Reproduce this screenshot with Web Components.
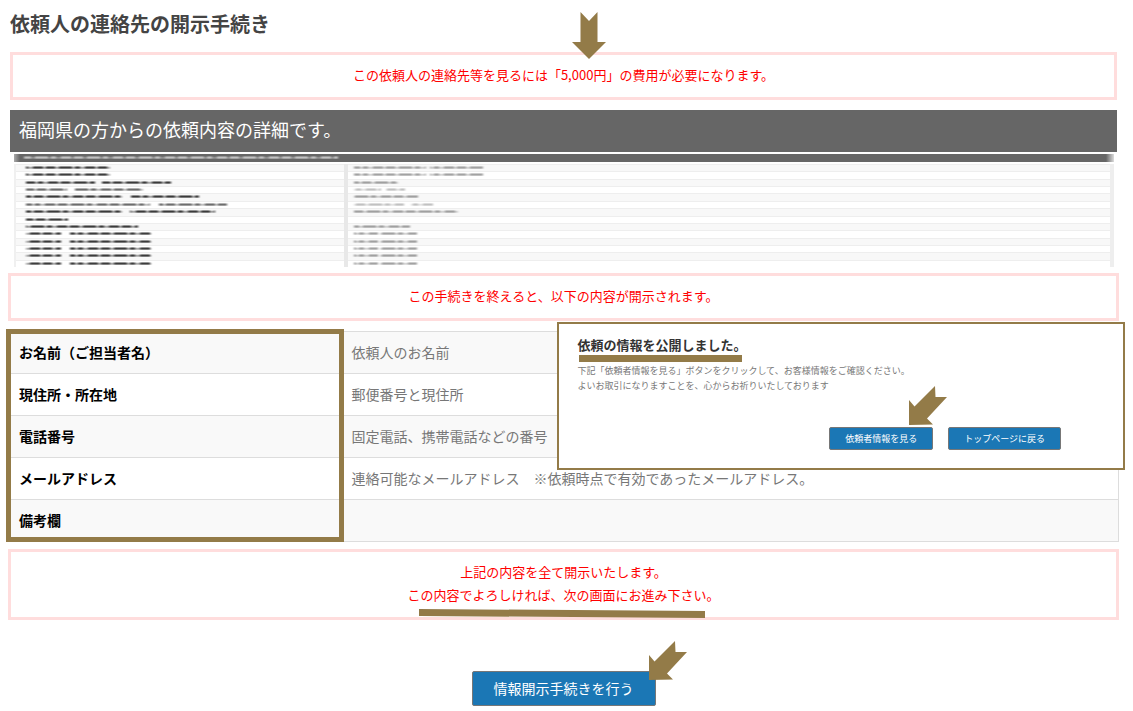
<!DOCTYPE html>
<html lang="ja">
<head>
<meta charset="UTF-8">
<meta name="viewport" content="width=device-width, initial-scale=1.0">
<title>依頼人の連絡先の開示手続き</title>
<style>
    body {
        margin: 0;
        background: #fff;
        font-family: "Noto Sans CJK JP", sans-serif;
        --mark: #937b48;
        --blue: #1b77b5;
        --dark: #666;
        --pink: #fdd;
    }
</style>
</head>
<body>
<disclosure-page></disclosure-page>

<script>
class MarkArrow extends HTMLElement {
    constructor() {
        super();
        this.attachShadow({ mode: 'open' });
        const down = this.getAttribute('direction') === 'down';
        const box = down ? [34, 47] : [38, 39];
        const points = down
            ? '8.5,0 17,9 25.5,0 25.5,30 34,30 17,47 0,30 8.5,30'
            : '26,0 26.5,11 38,11 18,32.5 24,38.5 0,39 0,14 5.5,20.5';
        this.shadowRoot.innerHTML = `
            <style>
                :host { display: block; pointer-events: none; }
                svg { display: block; fill: var(--mark); }
            </style>
            <svg width="${box[0]}" height="${box[1]}" viewBox="0 0 ${box[0]} ${box[1]}" aria-hidden="true">
                <polygon points="${points}"/>
            </svg>
        `;
    }
}

class NoticeBox extends HTMLElement {
    constructor() {
        super();
        this.attachShadow({ mode: 'open' });
        this.shadowRoot.innerHTML = `
            <style>
                :host {
                    display: block;
                    position: relative;
                    padding: 8px 10px 11px;
                    border: 3px solid var(--pink);
                    color: #f00;
                    font-size: 13px;
                    line-height: 23px;
                    text-align: center;
                }
            </style>
            <slot></slot>
        `;
    }
}

class ActionButton extends HTMLElement {
    constructor() {
        super();
        this.attachShadow({ mode: 'open' });
        this.shadowRoot.innerHTML = `
            <style>
                :host { display: inline-block; position: relative; }
                button {
                    display: block;
                    padding: 5px 21px;
                    border: 1px solid #777;
                    border-radius: 2px;
                    background: var(--blue);
                    color: #fff;
                    font-family: inherit;
                    font-size: 14px;
                    line-height: 23px;
                    cursor: pointer;
                }
                :host([size="small"]) button {
                    padding: 3px 15px;
                    font-size: 9px;
                    line-height: 15px;
                }
            </style>
            <button type="button"><slot></slot></button>
            <slot name="mark"></slot>
        `;
    }
}

// Flattened list of the request; every entry is [start, length] of a smudge
class RequestPreview extends HTMLElement {
    constructor() {
        super();
        this.attachShadow({ mode: 'open' });
        const image = { label: [[0, 35], [44, 81]], value: [[0, 24], [26, 37]] };
        const rows = [
            { label: [[0, 84]], value: [[0, 72], [76, 53]] },
            { label: [[0, 84]], value: [[0, 72], [76, 53]] },
            { label: [[0, 69], [76, 69]], value: [[0, 44]] },
            { label: [[0, 41], [49, 68]], value: [[0, 27], [32, 19]], faint: true },
            { label: [[0, 96], [105, 68]], value: [[0, 64]] },
            { label: [[0, 124], [133, 68]], value: [[0, 50], [57, 22]], faint: true },
            { label: [[0, 96], [104, 85]], value: [[0, 104]] },
            { label: [[0, 42]], value: [] },
            { label: [[0, 112]], value: [[0, 56]] },
            image, image, image, image, image
        ];
        this.shadowRoot.innerHTML = `
            <style>
                :host { display: block; margin: 0 3px 0 4px; }
                .defs { position: absolute; }
                .bar {
                    height: 8px;
                    padding-left: 10px;
                    background: linear-gradient(90deg, #aaa, var(--dark) 6px, var(--dark) calc(100% - 8px), #ddd);
                }
                .rows {
                    display: flex;
                    flex-direction: column;
                    height: 103px;
                    margin-top: 2px;
                }
                .row {
                    flex: 1;
                    display: grid;
                    grid-template-columns: 30% 1fr;
                    box-shadow: inset 0 1px #eee;
                }
                .row:nth-child(odd) { background: #f8f8f8; }
                .cell { padding-left: 10px; border-left: 2px solid #f0f0f0; }
                .cell + .cell { padding-left: 6px; border-left: 4px solid #e8e8e8; }
                .cell:last-child { border-right: 4px solid #eee; }
                .smudge { display: block; overflow: visible; }
            </style>
            <svg class="defs" width="0" height="0" aria-hidden="true">
                <filter id="soft" filterUnits="userSpaceOnUse" x="-6" y="-3" width="332" height="14">
                    <feGaussianBlur stdDeviation="1.3 0.6"/>
                </filter>
            </svg>
            <div class="bar">${this.smudge([[0, 314]], '#fff', 0.6)}</div>
            <div class="rows">
                ${rows.map((row) => `
                    <div class="row">
                        <div class="cell">${this.smudge(row.label, '#111', row.faint ? 0.6 : 0.8)}</div>
                        <div class="cell">${this.smudge(row.value, '#666', row.faint ? 0.4 : 0.6)}</div>
                    </div>
                `).join('')}
            </div>
        `;
    }

    smudge(parts, color, opacity) {
        const lines = parts.map(([x, length]) => `
            <path d="M${x} 3.7h${length}" stroke-width="2" opacity="0.45"/>
            <path d="M${x} 3.6h${length}" stroke-width="2" stroke-dasharray="9 4 13 3 5 5 10 3" stroke-dashoffset="${x + length}"/>
        `).join('');
        return `
            <svg class="smudge" width="320" height="7" aria-hidden="true">
                <g fill="none" stroke="${color}" opacity="${opacity}" filter="url(#soft)">${lines}</g>
            </svg>
        `;
    }
}

class ContentsTable extends HTMLElement {
    constructor() {
        super();
        this.attachShadow({ mode: 'open' });
        const rows = [
            ['お名前（ご担当者名）', '依頼人のお名前'],
            ['現住所・所在地', '郵便番号と現住所'],
            ['電話番号', '固定電話、携帯電話などの番号'],
            ['メールアドレス', '連絡可能なメールアドレス　※依頼時点で有効であったメールアドレス。'],
            ['備考欄', '']
        ];
        this.shadowRoot.innerHTML = `
            <style>
                :host { display: block; position: relative; }
                table {
                    width: 100%;
                    border-collapse: collapse;
                    table-layout: fixed;
                    border: 1px solid #ddd;
                    font-size: 14px;
                    line-height: 21px;
                }
                th, td {
                    height: 21px;
                    padding: 10px;
                    border-top: 1px solid #ddd;
                    text-align: left;
                }
                th { width: 30%; box-sizing: border-box; color: #000; font-weight: 700; }
                td { color: #777; }
                tr:nth-child(odd) { background: #f9f9f9; }
                .frame {
                    position: absolute;
                    inset: -2px auto 0 -2px;
                    width: calc(30% + 5px);
                    box-sizing: border-box;
                    border: 5px solid var(--mark);
                    pointer-events: none;
                }
            </style>
            <table>
                ${rows.map(([name, text]) => `<tr><th scope="row">${name}</th><td>${text}</td></tr>`).join('')}
            </table>
            <div class="frame"></div>
            <slot></slot>
        `;
    }
}

class PublishedDialog extends HTMLElement {
    constructor() {
        super();
        this.attachShadow({ mode: 'open' });
        this.shadowRoot.innerHTML = `
            <style>
                :host {
                    display: block;
                    box-sizing: border-box;
                    padding: 11px 62px 18px 18px;
                    border: 2px solid var(--mark);
                    background: #fff;
                }
                h2 {
                    position: relative;
                    width: fit-content;
                    margin: 0 0 8px;
                    color: #333;
                    font-size: 13px;
                    line-height: 20px;
                }
                h2::after {
                    content: "";
                    position: absolute;
                    inset: 20px 4px auto 2px;
                    height: 7px;
                    background: var(--mark);
                }
                p { margin: 0; color: #777; font-size: 9px; line-height: 15px; }
                .actions { display: flex; justify-content: flex-end; gap: 15px; margin-top: 34px; }
                mark-arrow { position: absolute; right: -14px; bottom: calc(100% + 2px); }
            </style>
            <h2>依頼の情報を公開しました。</h2>
            <p>下記「依頼者情報を見る」ボタンをクリックして、お客様情報をご確認ください。</p>
            <p>よいお取引になりますことを、心からお祈りいたしております</p>
            <div class="actions">
                <action-button size="small">依頼者情報を見る<mark-arrow slot="mark"></mark-arrow></action-button>
                <action-button size="small">トップページに戻る</action-button>
            </div>
        `;
    }
}

class DisclosurePage extends HTMLElement {
    constructor() {
        super();
        this.attachShadow({ mode: 'open' });
        this.shadowRoot.innerHTML = `
            <style>
                :host { display: block; padding: 9px 16px 4px 10px; }
                h1 { margin: 0 0 13px; color: #444; font-size: 20px; line-height: 30px; }
                h2 {
                    margin: 10px 0 2px;
                    padding: 4px 9px 8px;
                    background: var(--dark);
                    color: #fff;
                    font-size: 18px;
                    font-weight: 400;
                    line-height: 30px;
                }
                .result { margin: 6px -2px 0; }
                contents-table { margin: 10px 0 7px; }
                published-dialog { position: absolute; top: -9px; right: -6px; width: calc(51% + 1px); }
                .fee mark-arrow { position: absolute; left: calc(50% + 8px); bottom: 38px; }
                .underline { position: absolute; left: calc(50% - 145px); bottom: -1px; fill: var(--mark); }
                .submit { display: flex; justify-content: center; margin-top: 51px; }
                .submit mark-arrow { position: absolute; right: -31px; top: -30px; }
            </style>
            <main>
                <h1>依頼人の連絡先の開示手続き</h1>
                <notice-box class="fee">この依頼人の連絡先等を見るには「5,000円」の費用が必要になります。<mark-arrow direction="down"></mark-arrow></notice-box>
                <h2>福岡県の方からの依頼内容の詳細です。</h2>
                <request-preview></request-preview>
                <div class="result">
                    <notice-box>この手続きを終えると、以下の内容が開示されます。</notice-box>
                    <contents-table><published-dialog></published-dialog></contents-table>
                    <notice-box>
                        上記の内容を全て開示いたします。<br>この内容でよろしければ、次の画面にお進み下さい。
                        <svg class="underline" width="286" height="9" aria-hidden="true"><polygon points="0,0 286,2 286,9 0,7"/></svg>
                    </notice-box>
                </div>
                <div class="submit">
                    <action-button>情報開示手続きを行う<mark-arrow slot="mark"></mark-arrow></action-button>
                </div>
            </main>
        `;
    }
}

customElements.define('mark-arrow', MarkArrow);
customElements.define('notice-box', NoticeBox);
customElements.define('action-button', ActionButton);
customElements.define('request-preview', RequestPreview);
customElements.define('contents-table', ContentsTable);
customElements.define('published-dialog', PublishedDialog);
customElements.define('disclosure-page', DisclosurePage);
</script>
</body>
</html>
